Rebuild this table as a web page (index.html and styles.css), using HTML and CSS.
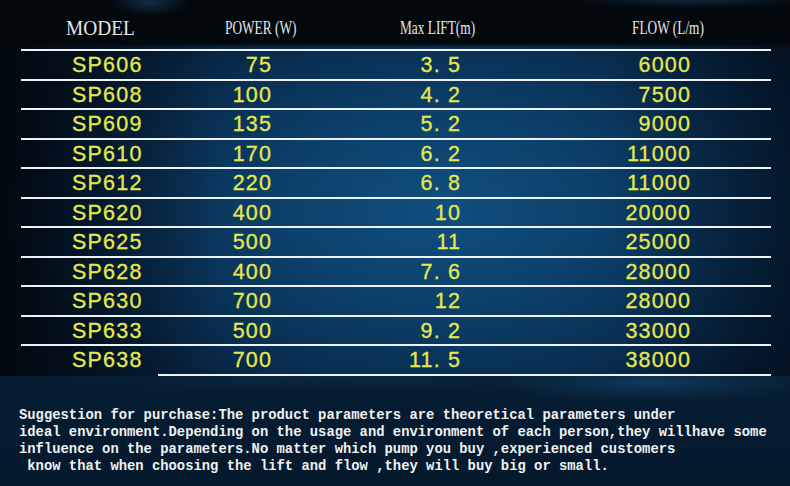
FILE: index.html
```html
<!DOCTYPE html>
<html lang="en">
<head>
<meta charset="utf-8">
<title>Pump parameters</title>
<link rel="stylesheet" href="styles.css">
</head>
<body>
<div class="page">
  <header class="head">
    <div class="head-grid">
      <span class="h h-model">MODEL</span>
      <span class="h h-cond">POWER (W)</span>
      <span class="h h-cond">Max LIFT(m)</span>
      <span class="h h-cond">FLOW (L/m)</span>
    </div>
  </header>
  <div class="rows">
    <div class="row"><span class="c-model">SP606</span><span class="c-num">75</span><span class="c-num">3. 5</span><span class="c-num">6000</span></div>
    <div class="row"><span class="c-model">SP608</span><span class="c-num">100</span><span class="c-num">4. 2</span><span class="c-num">7500</span></div>
    <div class="row"><span class="c-model">SP609</span><span class="c-num">135</span><span class="c-num">5. 2</span><span class="c-num">9000</span></div>
    <div class="row"><span class="c-model">SP610</span><span class="c-num">170</span><span class="c-num">6. 2</span><span class="c-num">11000</span></div>
    <div class="row"><span class="c-model">SP612</span><span class="c-num">220</span><span class="c-num">6. 8</span><span class="c-num">11000</span></div>
    <div class="row"><span class="c-model">SP620</span><span class="c-num">400</span><span class="c-num">10</span><span class="c-num">20000</span></div>
    <div class="row"><span class="c-model">SP625</span><span class="c-num">500</span><span class="c-num">11</span><span class="c-num">25000</span></div>
    <div class="row"><span class="c-model">SP628</span><span class="c-num">400</span><span class="c-num">7. 6</span><span class="c-num">28000</span></div>
    <div class="row"><span class="c-model">SP630</span><span class="c-num">700</span><span class="c-num">12</span><span class="c-num">28000</span></div>
    <div class="row"><span class="c-model">SP633</span><span class="c-num">500</span><span class="c-num">9. 2</span><span class="c-num">33000</span></div>
    <div class="row"><span class="c-model">SP638</span><span class="c-num">700</span><span class="c-num">11. 5</span><span class="c-num">38000</span></div>
  </div>
  <div class="endrule"></div>
  <div class="note">
    <div class="line">Suggestion for purchase:The product parameters are theoretical parameters under</div>
    <div class="line">ideal environment.Depending on the usage and environment of each person,they willhave some</div>
    <div class="line">influence on the parameters.No matter which pump you buy ,experienced customers</div>
    <div class="line"> know that when choosing the lift and flow ,they will buy big or small.</div>
  </div>
</div>
</body>
</html>
```

FILE: styles.css
```css
html, body {
  margin: 0;
  padding: 0;
}

body {
  width: 790px;
  height: 486px;
  overflow: hidden;
  background: #041527;
}

.page {
  width: 790px;
  height: 486px;
  display: flex;
  flex-direction: column;
  background:
    linear-gradient(to right, rgba(1, 6, 12, 0.9) 0, rgba(1, 6, 12, 0.45) 90px, rgba(1, 6, 12, 0) 220px),
    linear-gradient(to left, rgba(2, 10, 20, 0.5) 0, rgba(2, 10, 20, 0) 180px),
    radial-gradient(ellipse 440px 260px at 440px 210px, #0f4f80 0%, #0c416c 35%, #092f53 65%, #061a30 100%);
}

/* header band */
.head {
  height: 51px;
  padding: 0 19px 0 21px;
  box-sizing: border-box;
  background:
    radial-gradient(ellipse 40px 14px at 150px 2px, rgba(20, 60, 95, 0.7), rgba(20, 60, 95, 0)),
    radial-gradient(ellipse 120px 8px at 690px 0px, rgba(20, 60, 95, 0.6), rgba(20, 60, 95, 0)),
    linear-gradient(to bottom, #03080c 0, #03080c 43px, rgba(3, 8, 12, 0) 48px);
}

.head-grid {
  height: 51px;
  box-sizing: border-box;
  border-bottom: 2px solid #eef2f5;
  display: grid;
  grid-template-columns: 159px 175px 232px 1fr;
  align-items: start;
  padding: 16px 0 0 45px;
  line-height: 24px;
  color: #e4e6e8;
  font-family: "Liberation Serif", "DejaVu Serif", serif;
  white-space: nowrap;
}

.h {
  display: inline-block;
  transform-origin: left center;
}

.h-model {
  font-size: 22px;
  transform: scaleX(0.88);
}

.h-cond {
  font-size: 18px;
  transform: scaleX(0.74);
}

/* data rows */
.rows {
  padding: 0 19px 0 21px;
}

.row {
  display: grid;
  grid-template-columns: 130px 120px 189px 230px 1fr;
  height: 29.5px;
  box-sizing: border-box;
  border-bottom: 2px solid #eef2f5;
  padding-top: 1px;
  line-height: 26.5px;
  font-family: "Liberation Sans", Arial, sans-serif;
  font-size: 21.5px;
  letter-spacing: 1.2px;
  color: #e6e84c;
  -webkit-text-stroke: 0.3px #e6e84c;
  white-space: pre;
}

.row:last-child {
  border-bottom: 0;
  height: 27.5px;
}

.c-model {
  padding-left: 51px;
}

.c-num {
  text-align: right;
  margin-right: -1.2px;
}

.endrule {
  height: 2px;
  margin: 0 19px 0 158px;
  background: #eef2f5;
}

/* note */
.note {
  flex: 1;
  padding: 31px 0 0 19px;
  font-family: "Liberation Mono", "DejaVu Sans Mono", monospace;
  font-weight: bold;
  font-size: 13.85px;
  line-height: 17px;
  color: #f0f1f2;
  background:
    radial-gradient(ellipse 160px 20px at 650px 6px, rgba(22, 70, 110, 0.65), rgba(22, 70, 110, 0)),
    radial-gradient(ellipse 260px 14px at 330px 2px, rgba(14, 50, 82, 0.5), rgba(14, 50, 82, 0)),
    linear-gradient(to bottom, #061d33 0, #05192d 100%);
}

.line {
  white-space: pre;
}
```
